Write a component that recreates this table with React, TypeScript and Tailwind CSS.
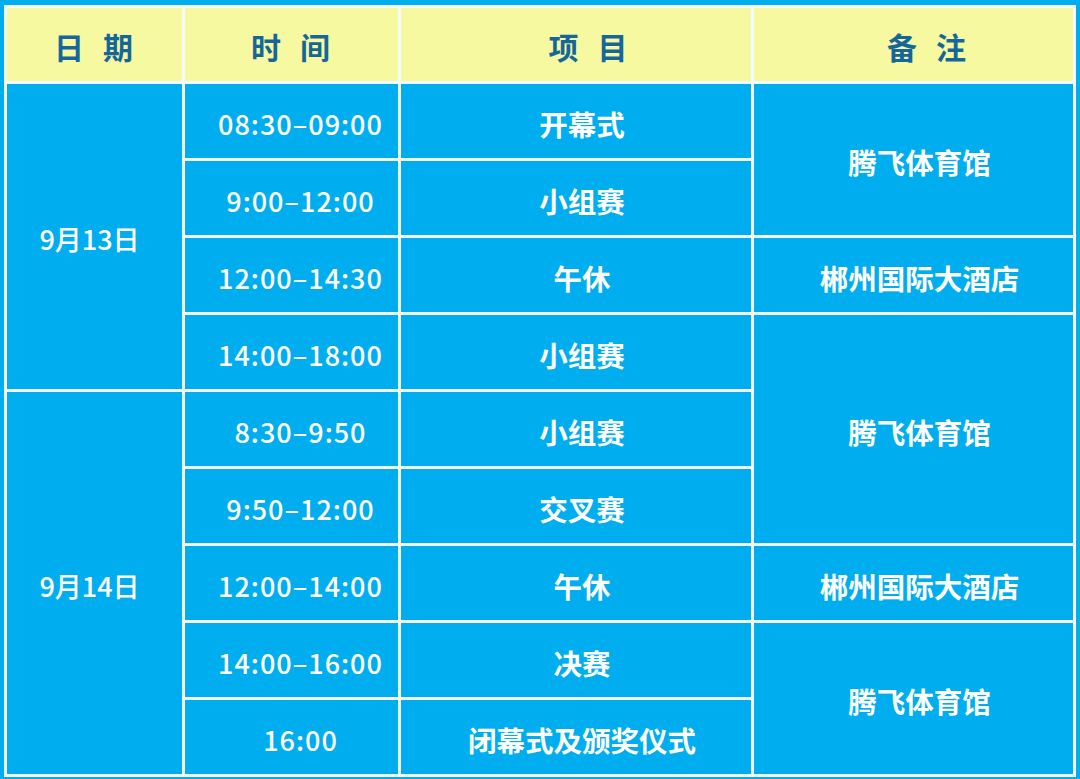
const font = { fontFamily: '"Noto Sans CJK SC", "Noto Sans", sans-serif' };

type Cell = { text: string; col: string; row: string; kind?: "time" | "date" };

const cells: Cell[] = [
  { text: "9月13日", col: "col-start-1", row: "row-start-2 row-span-4", kind: "date" },
  { text: "9月14日", col: "col-start-1", row: "row-start-6 row-span-5", kind: "date" },

  { text: "08:30–09:00", col: "col-start-2", row: "row-start-2", kind: "time" },
  { text: "9:00–12:00", col: "col-start-2", row: "row-start-3", kind: "time" },
  { text: "12:00–14:30", col: "col-start-2", row: "row-start-4", kind: "time" },
  { text: "14:00–18:00", col: "col-start-2", row: "row-start-5", kind: "time" },
  { text: "8:30–9:50", col: "col-start-2", row: "row-start-6", kind: "time" },
  { text: "9:50–12:00", col: "col-start-2", row: "row-start-7", kind: "time" },
  { text: "12:00–14:00", col: "col-start-2", row: "row-start-8", kind: "time" },
  { text: "14:00–16:00", col: "col-start-2", row: "row-start-9", kind: "time" },
  { text: "16:00", col: "col-start-2", row: "row-start-10", kind: "time" },

  { text: "开幕式", col: "col-start-3", row: "row-start-2" },
  { text: "小组赛", col: "col-start-3", row: "row-start-3" },
  { text: "午休", col: "col-start-3", row: "row-start-4" },
  { text: "小组赛", col: "col-start-3", row: "row-start-5" },
  { text: "小组赛", col: "col-start-3", row: "row-start-6" },
  { text: "交叉赛", col: "col-start-3", row: "row-start-7" },
  { text: "午休", col: "col-start-3", row: "row-start-8" },
  { text: "决赛", col: "col-start-3", row: "row-start-9" },
  { text: "闭幕式及颁奖仪式", col: "col-start-3", row: "row-start-10" },

  { text: "腾飞体育馆", col: "col-start-4", row: "row-start-2 row-span-2" },
  { text: "郴州国际大酒店", col: "col-start-4", row: "row-start-4" },
  { text: "腾飞体育馆", col: "col-start-4", row: "row-start-5 row-span-3" },
  { text: "郴州国际大酒店", col: "col-start-4", row: "row-start-8" },
  { text: "腾飞体育馆", col: "col-start-4", row: "row-start-9 row-span-2" },
];

const headers = [
  { text: "日 期", pad: "pl-[4px]" },
  { text: "时 间", pad: "pl-[4px]" },
  { text: "项 目", pad: "pl-[30px]" },
  { text: "备 注", pad: "pl-[32px]" },
];

export default function App() {
  return (
    <div className="w-[1080px] h-[779px] bg-[#00AEEF] pt-[5px] px-[3px]" style={font}>
      <div className="grid grid-cols-[175px_213px_350px_319px] grid-rows-[73px_repeat(9,74px)] gap-[3px] bg-[#f4fbff] p-[3px] w-[1072px] mx-auto">
        {headers.map((h) => (
          <div
            key={h.text}
            className={`row-start-1 bg-[#F6F99F] flex items-center justify-center pt-[4px] text-[30px] font-bold text-[#15679B] tracking-[6px] ${h.pad}`}
          >
            {h.text}
          </div>
        ))}
        {cells.map((c, i) => (
          <div
            key={i}
            className={`${c.col} ${c.row} bg-[#00AEEF] flex items-center justify-center pt-[6px] text-white ${
              c.kind === "time"
                ? "text-[27px] font-medium tracking-[1px] pl-[18px]"
                : c.kind === "date"
                  ? "text-[27px] font-medium pr-[10px]"
                  : "text-[28.5px] font-bold pl-[12px]"
            }`}
          >
            {c.text}
          </div>
        ))}
      </div>
    </div>
  );
}
